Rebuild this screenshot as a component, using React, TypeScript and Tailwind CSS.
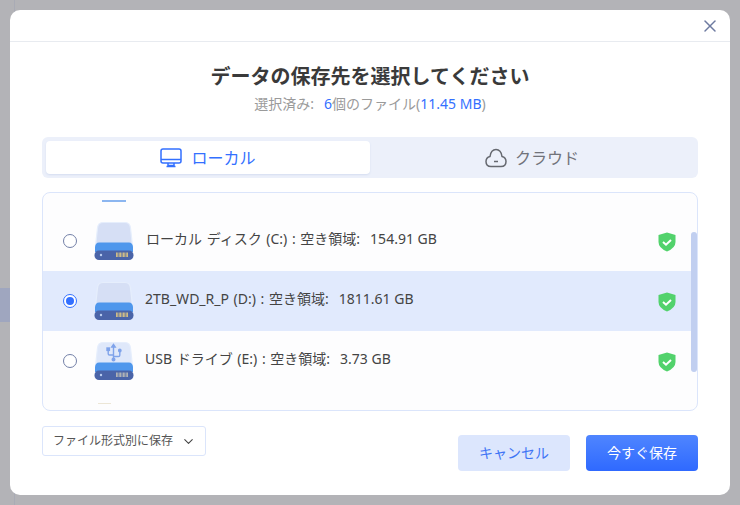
import { ChevronDown, X } from "lucide-react";

const DriveIcon = ({ usb = false, dim = false }: { usb?: boolean; dim?: boolean }) => {
  return (
    <svg width="40" height="40" viewBox="0 0 40 40" className="shrink-0">
      <path d="M3.500 7Q4 1.500 9 1.500H31Q36 1.500 36.500 7L38.500 25H1.500Z" fill={usb ? "#dfe8fa" : "#d6dff5"} stroke="#e6eefc" strokeWidth="1.200" />
      <path d="M5 21.500H35Q38.500 21.500 39 26L39 31H1L1 26Q1.500 21.500 5 21.500Z" fill="#4f97ec" />
      <rect x="0.500" y="29.500" width="39" height="9.500" rx="4.500" fill="#4a64a8" />
      <circle cx="7" cy="34" r="1.200" fill="#b9cdf0" />
      {[0, 1, 2, 3, 4, 5, 6, 7, 8].map((i) => (
        <rect key={i} x={22 + i * 1.4} y="31.500" width="0.800" height="4.500" fill={dim ? "#c9c6b8" : "#efd27e"} />
      ))}
      {usb && (
        <g fill="none" stroke="#7fa3ea" strokeWidth="1.400">
          <path d="M19.500 4V18" />
          <path d="M19.500 14H15.500Q14.200 14 14.200 12.700V9.500" />
          <path d="M19.500 15.500H24.500Q25.800 15.500 25.800 14.200V11" />
          <rect x="13" y="7" width="2.400" height="2.400" fill="#7fa3ea" />
          <circle cx="25.800" cy="9.500" r="1.200" fill="#7fa3ea" />
          <circle cx="19.500" cy="18.500" r="1.300" fill="#7fa3ea" />
          <path d="M17.800 6L19.500 3.500L21.200 6Z" fill="#7fa3ea" />
        </g>
      )}
    </svg>
  );
};

const Shield = () => {
  return (
    <svg width="18" height="20" viewBox="0 0 18 20" className="mt-[2px] shrink-0">
      <path d="M9 0.500L17.500 3V10Q17.500 16 9 19.500Q0.500 16 0.500 10V3Z" fill="#52d26c" />
      <path d="M5 10L8 12.700L13 8" fill="none" stroke="#fff" strokeWidth="2" />
    </svg>
  );
};

const Radio = ({ checked = false }: { checked?: boolean }) => {
  return (
    <span
      className={
        "flex h-[14px] w-[14px] shrink-0 items-center justify-center rounded-full border bg-white " +
        (checked ? "border-[#3370ff]" : "border-[#7380a8]")
      }
    >
      {checked && <span className="h-2 w-2 rounded-full bg-[#3370ff]" />}
    </span>
  );
};

const DriveRow = ({
  label,
  free,
  usb,
  selected,
  textGap = "ml-[11px]",
}: {
  label: string;
  free: string;
  usb?: boolean;
  selected?: boolean;
  textGap?: string;
}) => {
  return (
    <div className={"flex h-[60px] items-center pl-[20px] pr-[21px] " + (selected ? "bg-[#e1eafd]" : "")}>
      <Radio checked={selected} />
      <div className="ml-[17px]">
        <DriveIcon usb={usb} dim={usb} />
      </div>
      <p className={"mb-1 flex-1 text-sm text-[#444] " + textGap}>
        <span className="[word-spacing:1px]">{label} : 空き領域:</span>
        <span className="ml-[10px]">{free}</span>
      </p>
      <Shield />
    </div>
  );
};

const App = () => {
  return (
    <div
      className="relative flex h-[505px] w-[740px] overflow-hidden bg-[#b3b3b7] p-[10px] text-[#444]"
      style={{ fontFamily: '"Noto Sans", "Noto Sans CJK JP", sans-serif' }}
    >
      {/* things peeking out from behind the modal */}
      <div className="absolute bottom-0 left-[14px] top-0 w-px bg-[#a9abb5]" />
      <div className="absolute left-0 top-[288px] h-[34px] w-[10px] bg-[#9fa6bf]" />

      <div className="relative flex w-full flex-col rounded-[10px] bg-white">
        <div className="flex h-[32px] items-center justify-end border-b border-[#e8ebf0] pr-[10px]">
          <X size={20} strokeWidth={1.8} className="text-[#6d7aa0]" />
        </div>

        <div className="flex flex-col px-[32px]">
          <h1 className="mt-[20px] text-center text-[20px] font-bold leading-[30px] text-[#3a3a3a]">
            データの保存先を選択してください
          </h1>
          <p className="mt-[2px] text-center text-sm leading-[20px] text-[#9a9a9a]">
            選択済み:<span className="ml-[10px] text-[#3370ff]">6</span>個のファイル(
            <span className="text-[#3370ff]">11.45 MB</span>)
          </p>

          <div className="mt-[23px] flex h-[41px] rounded-md bg-[#ecf0fa] p-[4px]">
            <div className="flex w-[324px] items-center justify-center gap-[9px] rounded bg-white text-base text-[#3370ff] shadow-[0_1px_2px_#d5ddf0]">
              <svg width="22" height="20" viewBox="0 0 22 20" fill="none" stroke="#3370ff" strokeWidth="1.500">
                <rect x="1" y="1" width="20" height="14" rx="2" />
                <path d="M1 11.500H21" />
                <path d="M8 15V17.500H14V15" />
                <path d="M6.500 18.500H15.500" />
              </svg>
              ローカル
            </div>
            <div className="flex flex-1 items-center justify-center gap-[8px] text-base text-[#71737a]">
              <svg width="22" height="20" viewBox="0 0 22 20" fill="none" stroke="#65686f" strokeWidth="1.500">
                <path d="M6 18.500H16Q21 18.500 21 13.500Q21 9.500 17 8.500Q16 1.500 11 1.500Q6 1.500 5 8.500Q1 9.500 1 13.500Q1 18.500 6 18.500Z" />
                <path d="M9 13.500H13" />
              </svg>
              クラウド
            </div>
          </div>

          <div className="relative mt-[14px] h-[219px] overflow-hidden rounded-lg border border-[#dbe5fb] bg-[#fdfdfe]">
            <div className="absolute left-[59px] top-[7px] h-[1.500px] w-[24px] bg-[#8cb6f0]" />
            <div className="pt-[18px]">
              <DriveRow label="ローカル ディスク (C:)" free="154.91 GB" textGap="ml-[12px]" />
              <DriveRow label="2TB_WD_R_P (D:)" free="1811.61 GB" selected />
              <DriveRow label="USB ドライブ (E:)" free="3.73 GB" usb />
            </div>
            <div className="absolute bottom-[6px] left-[55px] h-px w-[13px] bg-[#ece6d6]" />
            <div className="absolute right-0 top-[39px] h-[140px] w-[6px] rounded bg-[#c1cff0]" />
          </div>

          <div className="mt-[15px] flex items-start justify-between">
            <button className="flex h-[30px] w-[164px] items-center justify-center gap-[8px] rounded-[3px] border border-[#dbe5fb] bg-white pl-px text-xs text-[#555]">
              ファイル形式別に保存
              <ChevronDown size={15} strokeWidth={1.7} className="text-[#444]" />
            </button>
            <div className="mt-[9px] flex gap-[16px]">
              <button className="h-[36px] w-[112px] rounded bg-[#dce6fd] text-sm text-[#3f75f5]">
                キャンセル
              </button>
              <button className="h-[36px] w-[112px] rounded bg-gradient-to-b from-[#4f85ff] to-[#2f69ff] text-sm text-white">
                今すぐ保存
              </button>
            </div>
          </div>
        </div>
      </div>
    </div>
  );
};

export default App;
